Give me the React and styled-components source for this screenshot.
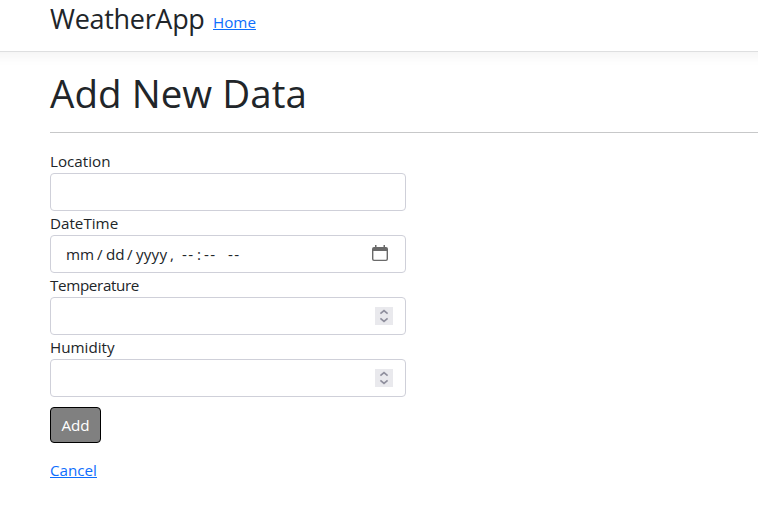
import React from 'react';
import styled, { createGlobalStyle } from 'styled-components';

const GlobalStyle = createGlobalStyle`
  * { box-sizing: border-box; }
  body {
    margin: 0;
    background: #fff;
    color: #212529;
    font-family: "Segoe UI", "Open Sans", "Noto Sans", sans-serif;
    font-size: 15.2px;
    line-height: 24px;
    overflow: hidden;
  }
`;

const Page = styled.div`
  height: 524px;
  overflow: hidden;
`;

const Header = styled.header`
  display: flex;
  height: 52px;
  margin: 0 -24px;
  padding: 0 0 0 74px;
  border-bottom: 1px solid #dedfe0;
  box-shadow: 0 4px 12px rgba(0, 0, 0, 0.05);
`;

const Brand = styled.span`
  width: 163px;
  padding-top: 2px;
  font-size: 27px;
  line-height: 34px;
  letter-spacing: -0.3px;
  white-space: nowrap;
`;

const Link = styled.a`
  color: #0d6efd;
  text-decoration: underline;
`;

const HomeLink = styled(Link)`
  padding-top: 10px;
`;

const Main = styled.main`
  padding: 17px 0 0 50px;
`;

const Title = styled.h1`
  margin: 0;
  height: 63px;
  font-size: 38.5px;
  font-weight: 400;
  line-height: 48px;
  letter-spacing: 0.05px;
  white-space: nowrap;
`;

const Rule = styled.hr`
  margin: 0 0 16px;
  border: 0;
  height: 1px;
  background: #c7c8c9;
`;

const Form = styled.form`
  width: 356px;
`;

const Label = styled.label`
  display: block;
  height: 24px;
  letter-spacing: ${({ $spacing }) => $spacing || 0}px;
`;

const Control = styled.div`
  display: flex;
  align-items: center;
  justify-content: flex-end;
  height: 38px;
  padding: 0 12px 0 15px;
  border: 1px solid #cfd0d9;
  border-radius: 4px;
`;

const DateText = styled.div`
  display: flex;
  flex: 1;
  height: 24px;
`;

const DatePart = styled.span`
  width: ${({ $width }) => $width}px;
  letter-spacing: ${({ $spacing }) => $spacing || 0}px;
  white-space: nowrap;
`;

const CalendarIcon = styled.svg`
  width: 16px;
  height: 16px;
  margin: 0 5px 3px 0;
`;

const Stepper = styled.svg`
  width: 18px;
  height: 18px;
  background: #e9e9ed;
`;

const AddButton = styled.button`
  display: block;
  width: 51px;
  height: 36px;
  margin: 10px 0 15px;
  padding: 0;
  border: 1px solid #000;
  border-radius: 4px;
  background: #808080;
  color: #fff;
  font: inherit;
`;

const dateParts = [
  ['mm', 31, 0],
  ['/', 9, 0],
  ['dd', 21, 0],
  ['/', 9, 0],
  ['yyyy', 34, 0.2],
  [',', 12, 0],
  ['--', 15, 1.4],
  [':', 7, 0],
  ['--', 24, 1.4],
  ['--', 16, 1.4],
];

function NumberControl() {
  return (
    <Control>
      <Stepper viewBox="0 0 18 18" fill="none" stroke="#8f8f9d" strokeWidth="1.7">
        <path d="M5.4 6.7 9 3.7l3.6 3M5.4 11.3l3.6 3 3.6-3" />
      </Stepper>
    </Control>
  );
}

export default function App() {
  return (
    <Page>
      <GlobalStyle />
      <Header>
        <Brand>WeatherApp</Brand>
        <HomeLink>Home</HomeLink>
      </Header>
      <Main>
        <Title>Add New Data</Title>
        <Rule />
        <Form>
          <Label>Location</Label>
          <Control />
          <Label>DateTime</Label>
          <Control>
            <DateText>
              {dateParts.map(([text, width, spacing], i) => (
                <DatePart key={i} $width={width} $spacing={spacing}>{text}</DatePart>
              ))}
            </DateText>
            <CalendarIcon viewBox="0 0 16 16">
              <path
                fill="#6a6a6a"
                fillRule="evenodd"
                d="M3 0h1.5v2h7V0H13v2h1a2 2 0 0 1 2 2v10a2 2 0 0 1-2 2H2a2 2 0 0 1-2-2V4a2 2 0 0 1 2-2h1zM1.4 6v8c0 .4.3.7.7.7h11.8c.4 0 .7-.3.7-.7V6z"
              />
            </CalendarIcon>
          </Control>
          <Label $spacing={-0.35}>Temperature</Label>
          <NumberControl />
          <Label>Humidity</Label>
          <NumberControl />
          <AddButton type="button">Add</AddButton>
          <Link>Cancel</Link>
        </Form>
      </Main>
    </Page>
  );
}
